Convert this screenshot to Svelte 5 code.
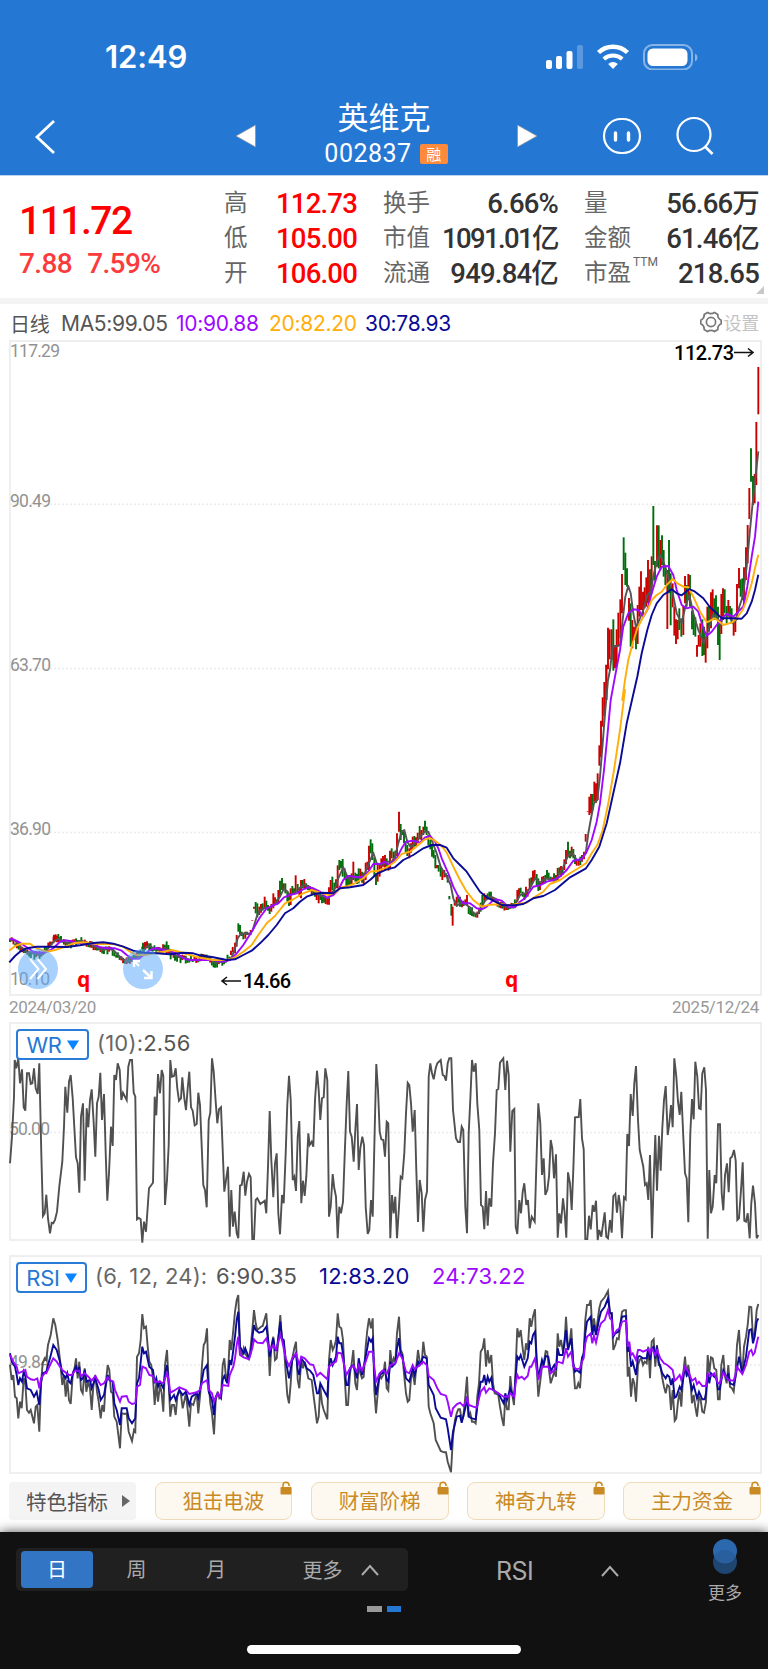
<script lang="ts">
  type Pt = [number, number]

  const quoteCols = [
    [
      { label: '高', value: '112.73', up: true },
      { label: '低', value: '105.00', up: true },
      { label: '开', value: '106.00', up: true }
    ],
    [
      { label: '换手', value: '6.66%' },
      { label: '市值', value: '1091.01亿', tight: true },
      { label: '流通', value: '949.84亿' }
    ],
    [
      { label: '量', value: '56.66万' },
      { label: '金额', value: '61.46亿' },
      { label: '市盈', value: '218.65', sup: 'TTM' }
    ]
  ]
  const indicators = ['狙击电波', '财富阶梯', '神奇九转', '主力资金']
  const periods = ['日', '周', '月']
  const gridLines = [504.3, 668.5, 832.5]
  const axisLabels = [
    { text: '117.29', y: 357, w: 50 },
    { text: '90.49', y: 507, w: 41 },
    { text: '63.70', y: 671, w: 41 },
    { text: '36.90', y: 835, w: 41 },
    { text: '10.10', y: 985, w: 40 }
  ]

  // series are stored in thirds of a pixel, relative to a block origin
  function block(ox: number, oy: number, s: string): Pt[] {
    return s.trim().split(/\s+/).map((p) => {
      const [x, y] = p.split(',').map(Number)
      return [ox + x / 3, oy + y / 3]
    })
  }
  const line = (pts: Pt[]) => pts.map(([x, y]) => `${x.toFixed(1)},${y.toFixed(1)}`).join(' ')

  const ma5 = [
    ...block(0, 900, '28,118 45,122 60,140 80,156 100,160 120,166 135,158 150,138 162,124 175,116 190,124 205,130 225,128 245,122 265,130 280,136 295,146 310,150 325,146 340,150 355,166 370,178 385,184 400,180 412,172 425,158 438,140 450,138 465,148 480,150 495,144 510,152 525,166 540,172 555,174 570,180 590,180'),
    ...block(200, 780, '0,538 15,532 30,536 45,548 60,546 80,543 95,532 105,505 113,475 122,462 135,460 150,462 158,450 170,410 180,390 195,384 210,382 225,372 240,350 252,325 262,335 270,345 285,338 297,325 312,315 325,318 340,330 355,345 370,350 385,355 395,340 405,325 415,295 430,262 440,285 450,300 465,292 480,295 495,280 505,255 520,218 530,250 545,255 560,245 575,245 585,230 595,190 605,155 613,150 622,185 632,202 645,190 660,170 675,155 685,155 697,185 710,220 722,260 740,290 752,315 760,355 770,378 780,370 795,372 810,382 820,400 832,402 843,385 855,362 870,350 885,355 900,372 920,382'),
    ...block(500, 660, '30,745 45,735 60,705 75,700 90,685 105,655 120,668 135,655 150,658 165,662 180,640 195,610 205,585 218,580 230,600 245,600 258,575 265,520 272,480 282,430 292,420 300,350 308,250 316,150 324,60'),
    ...block(560, 330, '150,1020 158,950 170,948 180,945 187,880 196,800 205,768 212,790 220,850 228,892 238,870 250,840 262,795 272,785 282,730 292,690 300,675 312,700 325,740 338,790 350,850 365,880 375,835 388,795 400,850 415,900 432,940 445,900 458,855 472,860 480,885 490,860 505,850 518,880 528,870 538,830 548,800 560,710 570,600 580,500 595,364')
  ]
  const ma10 = [
    ...block(0, 900, '28,118 40,118 60,128 80,142 100,155 120,158 140,156 160,145 180,125 195,121 215,124 235,130 260,130 280,132 300,142 325,145 345,145 365,152 380,165 400,178 415,178 430,165 450,150 470,144 490,150 510,153 530,160 550,175 570,180'),
    ...block(200, 780, '0,540 40,540 70,545 90,540 110,520 130,495 155,455 180,412 200,385 215,378 235,370 252,352 270,345 290,340 310,328 325,322 340,325 360,335 380,353 400,345 415,330 430,300 445,288 465,290 490,292 505,275 520,252 540,252 555,245 565,255 580,245 590,235 605,205 618,185 640,182 660,188 675,172 690,168 705,185 715,205 725,235 745,280 760,320 775,350 790,370 810,370 830,385 845,388 860,380 875,365 890,358 905,362 925,380 945,382'),
    ...block(500, 660, '60,725 75,715 100,680 120,676 140,665 160,660 180,650 200,630 220,602 245,597 258,580 275,540 290,485 300,430 312,330 322,230 332,120'),
    ...block(560, 330, '165,1040 180,960 190,890 205,850 220,838 235,840 250,860 262,840 275,790 290,740 305,710 325,708 340,735 350,780 365,825 380,835 400,830 415,845 430,895 440,917 455,905 470,885 485,865 500,852 520,860 535,845 550,830 562,770 575,680 585,620 595,515')
  ]
  const ma20 = [
    ...block(0, 900, '28,152 45,138 65,131 90,131 110,145 140,155 165,150 190,142 220,130 250,127 290,132 340,132 370,140 390,155 410,165 435,165 460,160 490,155 515,150 540,156 570,165'),
    ...block(200, 780, '0,533 40,540 80,540 105,532 130,515 155,495 175,465 200,430 225,408 255,370 280,358 310,340 335,330 360,338 385,345 405,338 425,322 445,318 465,310 490,295 510,275 535,272 560,262 585,245 605,222 630,215 655,195 675,178 690,174 705,182 725,198 740,218 760,260 780,300 800,335 820,360 845,380 870,374 900,373 930,376'),
    ...block(500, 660, '50,732 80,728 105,710 130,695 150,672 180,660 210,640 235,625 258,610 275,580 292,555 308,510 325,430 342,330 360,210 375,90'),
    ...block(560, 330, '187,1110 195,1050 205,990 218,940 232,895 250,860 265,835 275,810 290,795 305,785 320,765 338,747 352,760 370,770 385,772 400,800 420,845 440,877 465,865 490,885 515,878 530,865 548,840 560,810 575,760 585,715 595,674')
  ]
  const ma30 = [
    ...block(0, 900, '28,187 45,168 60,155 80,145 110,140 150,140 200,141 240,136 280,129 310,127 340,131 370,140 400,152 430,158 470,160 510,163 550,158 580,160'),
    ...block(200, 780, '0,526 40,532 80,540 105,538 130,525 155,512 180,490 205,465 230,435 255,400 280,385 300,365 320,350 340,343 365,338 400,340 420,325 450,322 490,315 510,300 530,282 560,268 585,262 610,240 640,225 670,205 695,195 720,195 740,203 760,235 780,255 800,275 820,305 840,335 860,352 880,362 905,375'),
    ...block(500, 660, '45,736 70,732 100,715 130,708 165,690 210,652 258,625 275,600 298,560 320,490 340,400 360,310 380,190 405,80'),
    ...block(560, 330, '232,1040 245,970 262,900 275,855 290,820 310,795 335,778 350,790 365,796 388,777 405,785 430,805 450,832 470,850 485,865 510,865 545,866 560,850 575,815 585,780 595,734')
  ]
  const maLines = [
    { color: '#555555', pts: line(ma5) },
    { color: '#9d0aff', pts: line(ma10) },
    { color: '#ffae0a', pts: line(ma20) },
    { color: '#0a0a96', pts: line(ma30) }
  ]

  // bars: x,high,low with r = rise, g = fall
  function bars(ox: number, oy: number, s: string) {
    return s.trim().split(/\s+/).map((b) => {
      const up = b.endsWith('r')
      const [x, hi, lo] = b.slice(0, -1).split(',').map(Number)
      return { x: ox + x / 3, y1: oy + hi / 3, y2: oy + lo / 3, up }
    })
  }
  function yAt(pts: Pt[], x: number) {
    const i = pts.findIndex((p) => p[0] >= x)
    if (i < 1) return pts[0][1]
    const [a, b] = [pts[i - 1], pts[i]]
    return a[1] + ((b[1] - a[1]) * (x - a[0])) / (b[0] - a[0] || 1)
  }
  // quiet stretches hug the 5-day average
  function quietBars(from: number, to: number) {
    const out = []
    let seed = 7
    for (let x = from; x < to; x += 1.74) {
      seed = (seed * 73 + 41) % 211
      const mid = yAt(ma5, x + 2) + ((seed % 7) - 3) * 0.5
      const half = 1.5 + (seed % 5) * 0.6
      out.push({ x, y1: mid - half, y2: mid + half, up: seed % 9 < 4 })
    }
    return out
  }
  const candles = [
    ...quietBars(10, 234),
    ...bars(0, 900, '162,104,122r 167,103,120r 175,102,118g 183,108,124g 429,128,152g 435,126,150r 441,124,145r 452,130,145g 500,124,150g 505,135,155g 512,155,178g 525,160,182g 645,185,203g'),
    ...bars(200, 780, '105,488,520r 110,465,500r 115,430,455g 120,435,462g 125,455,468g 130,460,478g 136,455,476r 141,455,465g 147,458,464r 152,450,465r 157,421,423r 162,380,386r 167,366,400g 172,370,412g 178,380,405r 183,372,398r 188,370,392g 194,350,385r 199,362,385g 204,375,392g 209,380,402g 214,372,395r 220,340,385r 225,352,375r 230,358,375g 235,330,370r 240,302,350g 246,294,330g 251,310,332r 256,310,340g 262,332,365g 267,340,378g 272,325,375r 277,318,345g 282,325,345g 287,286,335r 293,312,340g 298,325,350r 303,300,355r 308,300,325g 313,297,325r 318,310,328g 324,315,330g 330,318,332r 335,322,342r 340,330,345g 345,330,350g 350,335,360r 356,345,370r 361,340,360g 366,345,370g 372,348,368g 377,350,372r 382,355,374r 387,322,374r 392,300,345r 397,290,330g 403,308,335g 408,298,325r 413,256,325r 418,240,270g 423,243,265g 428,237,290g 434,265,300g 439,285,318g 444,292,325g 450,285,318g 455,280,315r 460,245,300r 466,278,305g 471,282,312g 476,265,310g 481,266,290r 486,275,308g 491,278,312r 497,248,300r 502,245,270r 507,197,270r 512,178,220g 517,190,240g 523,232,290g 528,280,315g 533,255,305r 539,250,290r 544,235,275r 549,228,260r 555,225,270r 560,235,260g 565,250,272r 570,212,268r 575,205,235g 581,215,240r 586,212,235g 591,160,228r 597,95,155r 602,132,180g 607,150,165g 612,155,190g 617,185,220g 622,195,228g 628,205,235r 633,190,218r 638,170,208r 643,168,200g 648,172,198r 653,158,190r 659,138,178g 664,150,180r 670,140,165r 675,122,152g 680,140,165g 685,165,195g 691,180,208g 696,198,230g 701,210,235g 706,225,265g 711,255,265r 716,255,275g 722,262,290g 727,270,300r 733,270,292r 738,280,290g 743,285,308g 748,348,358g 754,372,407g 758,380,437r 764,360,377r 770,350,375r 775,345,368g 780,350,380g 786,365,382r 791,362,378g 796,358,374r 801,345,375r 806,378,402g 811,385,405g 816,382,408g 821,395,410g 827,400,412g 832,395,413r 837,388,402r 842,368,395g 847,345,372g 853,340,365r 858,345,358r 863,340,358g 868,335,355g 873,335,360g 878,350,362r'),
    ...quietBars(494, 516),
    ...bars(500, 660, '52,690,725r 57,685,710r 62,683,700g 68,695,710g 73,700,720g 78,680,712r 83,688,710r 89,655,690r 94,652,675g 99,632,665r 104,630,660r 110,642,675g 115,655,693g 120,665,690r 126,650,672r 131,648,670r 136,645,670g 141,630,655g 146,638,660g 152,650,662g 157,652,664r 162,640,665g 168,645,665r 173,624,660r 178,622,645g 183,618,650r 188,625,645g 193,598,630r 198,570,612r 204,545,592g 210,572,595g 215,560,590r 220,567,595g 225,585,612g 230,600,617r 236,600,617r 241,590,615g 246,585,605r 252,575,598r 257,522,545r 263,454,456r 268,410,465r 273,402,460r 278,402,450g 283,365,425r 288,370,428r 293,340,420r 298,256,317r 303,182,292r 308,112,200r 313,66,168r 319,14,120r'),
    ...bars(560, 330, '144,893,1018r 139,1005,1110r 149,898,988r 155,898,990r 160,868,1022g 165,945,1015r 170,898,1010r 175,848,950r 181,808,925r 186,732,850r 191,622,720g 196,668,765g 201,715,770g 207,804,872r 212,820,950g 217,870,955r 222,890,930r 228,890,958g 233,825,942r 238,770,860r 243,724,840r 249,785,855r 254,772,835r 259,742,830r 264,690,820r 270,718,820g 275,679,790r 280,528,705g 285,693,752g 291,586,710r 296,586,715g 301,630,720r 306,616,705g 311,660,740g 316,705,765g 322,720,897r 327,630,790g 332,730,886g 338,760,832r 343,830,917r 348,868,942r 353,870,928r 358,835,900g 364,865,920g 370,828,915r 375,738,820r 380,765,830g 385,732,810r 390,735,830g 396,842,898g 401,855,915g 406,862,920g 411,945,980r 416,915,950r 421,880,950r 427,868,978g 432,890,975g 437,920,998r 442,830,955r 447,828,905g 453,787,895r 458,778,860r 463,805,870g 468,796,870g 474,830,945g 479,880,990g 484,792,912r 489,775,870r 494,778,850g 500,828,880g 505,810,860r 510,828,865g 515,835,880g 521,870,917r 526,860,906r 531,762,870r 537,714,775r 542,748,800g 547,745,810g 552,712,830r 558,652,750r 563,585,700r 568,474,567r 573,355,455g 579,438,525g 584,432,520r 589,276,465r 595,111,253r')
  ]

  const wr = line([
    ...block(0, 1020, '30,430 36,350 42,230 44,120 49,145 55,115 60,190 66,148 71,262 76,272 81,160 87,160 92,192 97,190 102,145 107,205 113,222 118,130 124,400 129,588 134,580 139,524 144,595 150,640 155,608 160,610 165,600 171,575 178,500 187,425 192,320 196,200 202,278 207,185 212,165 218,235 228,412 233,430 238,518 243,290 249,250 254,482 260,265 265,322 270,240 275,208 281,310 286,410 291,250 296,230 301,158 306,300 312,222 317,400 322,542 327,460 333,320 338,378 343,165 348,180 353,130 359,150 364,240 369,218 380,240 385,140 390,120 396,120 401,218 406,230 411,598 416,594 422,598 427,668 432,605 438,635 447,505 459,488 464,230 469,286 474,162 480,220 485,150 490,168 495,555 501,480 506,375 511,120 516,170 522,168 527,145 532,205 537,242 543,235 547,172 553,235 558,270 563,205 568,155 573,262 578,272 584,316 590,312 595,218 600,255 610,495 615,510 620,562 626,300 631,278 636,115 641,155 647,245 652,310 657,268 663,262 668,390 673,515 678,480 684,440 689,650 694,510 699,620 704,575 710,640 715,655 720,497 725,495 731,455 736,527 741,485 747,462 752,472 757,657 762,657 767,540 772,535 781,552 794,542 799,580 804,440 809,273 814,420 820,532 825,430 830,400 835,580 840,643 846,525 851,550 857,400 862,255 867,167 872,240 878,480 883,470 888,513 893,350 898,303 904,550 909,482 914,528 919,470 925,340 929,375 935,365 940,380 945,240 951,152 956,210 961,300 966,235 971,232 976,145 982,180 987,590 992,560 998,462 1003,505 1008,530 1013,655 1018,560 1023,580 1029,545 1035,380 1040,250 1045,153 1050,335 1055,350 1061,425 1066,330 1071,252 1076,450 1081,385 1087,350 1092,375 1097,560 1103,642 1108,630 1113,540 1118,590 1124,330 1129,132 1134,210 1139,335 1144,358 1150,360 1155,410 1160,305'),
    ...block(380, 1020, '25,310 31,655 36,525 41,580 46,530 51,655 57,560 62,470 67,475 73,400 78,280 83,188 88,195 93,250 98,335 104,270 109,450 114,606 119,480 125,520 130,635 135,540 141,515 146,170 151,130 156,160 161,178 167,145 172,130 182,120 188,165 193,168 198,182 203,130 208,115 214,115 219,270 228,355 234,366 240,366 245,320 250,330 256,560 261,640 266,340 271,240 276,120 281,155 287,130 292,250 298,330 303,555 308,560 313,628 318,513 323,617 328,535 334,560 339,430 345,340 350,210 355,207 360,128 370,115 376,210 381,122 386,165 391,395 397,273 403,267 407,620 412,642 418,540 423,580 428,515 433,490 439,555 444,540 449,625 455,590 464,605 470,400 475,250 481,310 486,465 491,415 496,525 502,510 507,470 512,360 517,385 522,475 528,403 533,653 538,580 543,610 549,535 554,580 559,653 564,457 570,490 575,570 580,450 585,292 596,291 601,237 606,355 611,388 616,657 622,657 627,587 632,628 638,555 643,575 648,542 653,660 658,630 664,650 674,577 679,650 684,655 690,600 695,638 700,528 706,521 711,578 716,525 721,560 726,655 732,532 737,538 742,342 747,378 752,222 758,288 763,190 768,138 774,300 779,390 790,440 795,495 800,490 805,540 810,405 816,655 821,480 826,345 831,512 837,347 842,452 847,325 852,240 857,198 863,345 868,310 873,255 878,322 883,115 889,170 894,245 899,285 904,215 910,350 915,460 920,475 925,607 931,340 936,237 941,298 946,125 952,170 957,265 962,267 967,160 973,142 978,210 983,656 988,450 993,580 998,560 1004,465 1009,490 1014,313 1020,313 1025,520 1030,571 1035,465 1041,430 1046,517 1051,415 1056,410 1062,390 1067,422 1072,600 1077,595 1083,510 1088,427 1093,602 1098,605 1103,580 1109,655 1114,550 1119,497 1125,550 1130,655 1135,645')
  ])

  const rsi6 = line([
    ...block(0, 1250, '30,345 35,390 40,375 45,440 50,445 55,505 60,455 65,475 71,385 76,400 81,480 87,488 92,480 102,520 107,470 112,465 118,545 123,400 128,340 134,325 139,330 144,285 152,255 160,205 166,225 173,270 180,330 187,405 192,375 197,440 202,390 207,450 212,462 218,375 223,360 228,325 233,385 238,335 243,420 248,430 254,355 259,425 265,395 270,415 275,480 280,410 286,375 291,425 296,455 302,505 307,465 312,485 317,400 323,345 328,360 333,425 338,430 343,500 350,515 360,595 365,490 375,492 380,490 386,545 396,573 402,540 406,545 411,320 417,310 422,270 427,192 432,235 438,230 443,290 448,335 454,345 459,385 464,465 469,400 474,455 480,405 485,430 490,485 495,345 501,300 506,400 511,500 516,465 522,465 527,495 532,440 538,420 543,435 548,475 558,430 563,480 568,530 573,460 580,465 590,430 595,490 601,430 606,345 611,285 616,275 621,235 626,400 631,460 636,490 642,553 647,450 653,425 658,445 663,440 668,345 673,325 679,395 684,370 689,270 694,300 700,240 705,185 710,150 715,135 720,290 726,320 731,295 736,310 741,320 747,325 752,290 757,240 762,180 767,220 772,240 783,230 788,228 799,190 804,260 809,378 814,290 820,260 825,330 830,325 836,260 841,195 846,270 851,275 857,370 862,435 867,460 872,400 877,325 883,295 888,275 893,390 898,415 904,330 909,355 914,335 920,360 925,385 935,390 940,430 945,470 951,520 956,500 961,410 966,460 971,480 982,508 987,330 992,270 998,300 1003,290 1008,270 1013,190 1018,230 1024,235 1029,270 1034,380 1039,465 1044,465 1050,370 1055,340 1060,300 1066,400 1071,420 1076,340 1081,370 1086,385 1091,380 1097,290 1102,240 1107,205 1113,235 1118,205 1123,420 1128,490 1133,430 1139,370'),
    ...block(380, 1250, '4,385 10,375 15,335 20,415 25,422 31,300 36,345 41,325 46,335 51,250 57,200 62,300 67,310 72,370 78,430 83,455 88,450 93,385 98,365 104,405 109,350 114,300 119,335 125,340 130,275 135,315 140,320 146,470 151,490 156,505 161,520 167,570 172,580 182,603 192,607 198,607 203,635 213,667 219,560 225,510 230,490 235,478 240,478 245,510 250,500 256,440 261,380 266,500 271,490 276,515 282,515 287,520 292,440 297,400 302,305 308,295 313,265 318,350 323,300 328,340 334,315 339,400 344,430 350,432 355,435 360,470 365,500 371,528 376,440 381,478 386,478 391,378 396,430 402,465 407,350 412,235 417,262 422,240 428,295 433,330 438,280 443,300 449,205 454,230 459,200 465,178 470,350 475,440 480,400 486,350 491,340 497,303 502,305 507,360 512,400 517,385 523,365 528,380 533,250 538,290 543,270 548,300 553,290 558,200 564,295 569,280 574,235 580,345 585,415 590,415 595,400 600,415 606,325 611,310 616,210 621,165 627,165 632,150 637,240 642,205 648,250 653,210 658,175 663,155 674,142 684,123 690,190 695,190 700,300 706,285 711,265 716,268 721,225 726,185 732,181 738,181 743,380 748,350 753,440 758,385 763,400 768,455 774,345 779,330 784,325 789,345 794,335 800,340 805,290 810,385 815,275 821,268 826,350 831,285 836,345 841,345 847,385 852,410 857,430 862,405 868,410 873,480 878,420 884,512 889,505 894,455 899,425 904,470 910,370 915,320 920,380 925,345 931,390 936,460 941,435 946,470 951,500 957,440 962,450 967,485 972,488 978,455 983,315 988,370 993,322 998,325 1003,355 1009,360 1014,448 1019,448 1024,345 1030,315 1035,380 1040,400 1045,345 1050,410 1056,415 1061,425 1066,380 1071,285 1077,240 1082,330 1087,370 1092,290 1098,260 1103,225 1108,170 1114,172 1119,265 1124,250 1130,180 1135,162')
  ])
  const rsi12 = line([
    ...block(0, 1250, '30,310 35,335 45,350 50,375 55,405 60,385 66,395 71,365 76,378 81,415 92,420 102,440 110,425 118,465 123,400 128,370 139,365 144,345 150,325 160,285 170,300 180,335 187,370 197,385 202,370 207,395 212,400 220,365 228,350 233,370 238,350 243,390 249,385 254,360 260,395 270,390 275,415 286,385 296,420 302,450 312,435 323,375 328,390 338,395 343,460 350,480 360,525 365,475 380,475 386,505 396,520 406,505 411,400 417,385 427,290 432,310 438,305 448,350 459,360 464,400 469,385 474,410 480,395 490,415 495,370 501,345 506,400 511,450 522,435 527,450 538,420 548,435 558,425 568,465 575,440 590,430 595,445 606,390 611,360 621,345 626,425 636,450 642,495 647,440 653,430 663,445 668,390 673,378 682,400 689,330 694,345 700,300 705,260 710,210 715,185 720,290 731,310 736,295 747,325 752,310 757,265 762,225 767,240 777,248 788,245 799,230 804,265 809,320 820,265 825,300 830,300 841,215 846,265 851,270 857,330 867,385 877,330 888,310 893,360 898,375 904,325 914,340 920,355 930,362 940,375 951,430 956,430 961,400 971,420 982,440 987,350 992,325 998,345 1008,320 1013,260 1018,280 1024,280 1029,310 1039,405 1044,405 1050,355 1060,345 1071,385 1076,325 1086,375 1097,320 1107,265 1113,275 1118,265 1123,370 1128,435 1139,375'),
    ...block(380, 1250, '8,368 15,360 20,390 25,395 31,335 36,350 46,340 51,295 57,265 62,315 67,315 78,385 88,395 98,355 104,375 114,335 119,345 130,320 140,325 146,405 161,435 167,475 182,503 198,508 203,535 213,600 219,545 230,500 240,497 245,518 256,475 261,440 266,500 276,505 287,508 297,430 302,395 308,395 313,375 318,405 323,380 328,395 334,383 339,420 355,430 371,460 376,430 381,450 391,415 402,445 407,380 412,320 417,328 422,315 433,350 443,325 449,275 454,280 459,255 465,245 470,330 475,385 486,330 491,345 497,318 505,320 512,365 517,355 523,345 528,360 533,295 538,315 548,315 558,240 564,300 574,265 580,340 585,365 590,360 600,368 606,325 611,310 616,250 621,215 632,200 637,255 642,225 648,255 658,205 663,185 674,170 684,145 690,190 695,190 700,260 706,250 716,245 726,200 738,198 743,305 748,290 753,350 758,335 768,375 774,320 779,318 789,325 800,325 805,295 810,330 815,295 821,290 826,325 831,290 836,335 847,370 857,385 862,375 868,380 873,405 878,385 884,443 889,440 899,410 904,420 910,385 915,350 920,375 925,365 936,420 941,405 951,445 957,425 967,448 974,448 978,430 983,370 988,400 993,370 1003,380 1009,385 1014,418 1019,418 1030,360 1040,385 1045,370 1050,400 1061,405 1066,385 1077,320 1087,370 1098,320 1108,240 1114,238 1119,280 1124,260 1130,215 1135,205')
  ])
  const rsi24 = line([
    ...block(0, 1250, '30,315 40,335 50,350 55,370 66,365 76,360 81,380 92,388 102,390 112,385 118,415 123,385 134,370 139,370 150,345 160,325 170,335 180,350 187,360 207,375 215,375 225,362 238,362 243,378 254,370 265,380 275,392 286,378 296,395 302,405 312,400 323,382 333,392 340,395 345,420 360,455 365,440 380,438 386,455 396,462 406,460 411,410 420,405 427,350 438,355 448,375 459,378 464,395 480,395 490,400 501,370 506,390 511,428 522,422 538,412 558,420 568,432 590,427 600,420 606,400 621,390 626,420 636,430 642,455 653,430 660,440 668,405 685,408 689,375 700,350 705,325 710,285 715,260 720,315 731,322 747,328 757,295 762,268 772,278 788,280 799,265 809,300 820,285 828,300 841,255 846,270 857,325 867,348 877,325 888,310 898,345 904,320 914,325 930,343 940,345 951,378 961,368 982,388 987,350 1000,340 1008,335 1013,308 1024,310 1029,330 1039,375 1050,355 1060,347 1071,365 1076,345 1086,362 1097,335 1107,305 1118,305 1123,350 1128,395 1139,370'),
    ...block(380, 1250, '4,365 10,360 20,372 31,345 46,340 57,310 67,325 78,365 88,370 98,345 104,358 119,345 130,335 140,345 146,378 161,390 172,415 182,432 198,437 203,455 213,500 219,475 230,463 240,458 250,468 256,460 261,440 266,465 280,470 290,473 302,425 313,412 318,428 328,415 340,420 355,430 371,440 385,440 391,430 402,440 407,400 412,375 417,385 425,380 433,388 443,378 449,350 454,350 465,325 475,390 486,350 497,350 505,350 512,370 523,360 533,335 548,340 558,295 564,320 574,305 580,350 590,358 600,355 606,335 611,325 616,280 621,260 632,250 637,280 642,258 648,278 658,235 663,220 674,210 684,180 690,205 695,210 700,255 711,240 720,235 726,215 738,212 743,290 748,275 753,315 758,310 768,330 774,300 780,300 789,305 805,298 810,310 815,295 826,315 831,300 841,325 852,340 862,345 868,350 878,360 884,392 889,388 899,375 904,390 915,350 925,365 936,392 946,385 951,402 957,395 967,408 978,408 983,370 993,378 1003,370 1014,400 1019,400 1030,368 1045,390 1061,392 1066,375 1071,350 1087,372 1098,345 1108,305 1114,300 1119,315 1124,308 1130,280 1135,260')
  ])
</script>

<div class="app">
  <header>
    <div class="status">
      <span class="time">12:49</span>
      <svg class="status-icons" viewBox="0 0 156 26" width="156" height="26">
        <g fill="#fff">
          <rect x="1" y="16" width="6" height="9" rx="2" />
          <rect x="11" y="12" width="6" height="13" rx="2" />
          <rect x="21.500" y="7" width="6" height="18" rx="2" />
          <rect x="32" y="1" width="6" height="24" rx="2" opacity=".25" />
          <path d="M68 25 l-4.800 -5 a7 7 0 0 1 9.600 0 z" />
          <rect x="102.500" y="4.500" width="40" height="17.500" rx="5.500" />
          <path d="M150 9.500 q2.500 1 2.500 4 t-2.500 4 z" opacity=".45" />
        </g>
        <g fill="none" stroke="#fff">
          <path d="M53.500 8.500 a21 21 0 0 1 29 0" stroke-width="4.400" />
          <path d="M58.800 15 a13.500 13.500 0 0 1 18.400 0" stroke-width="4" />
          <rect x="99" y="1" width="48" height="24.500" rx="8.500" stroke-width="2" opacity=".45" />
        </g>
      </svg>
    </div>
    <nav>
      <svg class="back" viewBox="0 0 22 36" width="22" height="36"><path d="M20 2 L3 18 L20 34" fill="none" stroke="#fff" stroke-width="2.800" /></svg>
      <svg class="prev" viewBox="0 0 20 24" width="20" height="24"><path d="M19.500 1 V23 L0 12 z" fill="#fff" stroke="#8a8f96" stroke-width=".7" /></svg>
      <div class="title">
        <h1>英维克</h1>
        <div class="code">002837 <i>融</i></div>
      </div>
      <svg class="next" viewBox="0 0 20 24" width="20" height="24"><path d="M.5 1 V23 L20 12 z" fill="#fff" stroke="#8a8f96" stroke-width=".7" /></svg>
      <svg class="bot" viewBox="0 0 40 40" width="40" height="40" fill="none" stroke="#fff" stroke-width="2.200">
        <rect x="2" y="3" width="36" height="34" rx="17" />
        <path d="M13.500 17 v7 M26.500 17 v7" stroke-width="3.400" stroke-linecap="round" />
      </svg>
      <svg class="search" viewBox="0 0 40 40" width="40" height="40" fill="none" stroke="#fff" stroke-width="2.200">
        <circle cx="19" cy="18.500" r="16.500" />
        <path d="M30 30.500 L37.500 38" stroke-width="2.600" />
      </svg>
    </nav>
  </header>

  <section class="quote">
    <div class="price">
      <div class="last">111.72</div>
      <div class="change"><span>7.88</span><span>7.59%</span></div>
    </div>
    {#each quoteCols as col}
      <dl>
        {#each col as item}
          <div class="row">
            <dt>{item.label}{#if item.sup}<sup>{item.sup}</sup>{/if}</dt>
            <dd class:up={item.up} class:tight={item.tight}>{item.value}</dd>
          </div>
        {/each}
      </dl>
    {/each}
    <span class="corner"></span>
  </section>

  <div class="legend">
    <span class="cn">日线</span>
    <span class="m5">MA5:99.05</span>
    <span class="m10">10:90.88</span>
    <span class="m20">20:82.20</span>
    <span class="m30">30:78.93</span>
    <span class="settings">
      <svg viewBox="0 0 22 22" width="22" height="22" fill="none" stroke="#777" stroke-width="1.700">
        <path d="M7.500 1.500 q3.500 2.200 7 0 l3.300 2 q-.3 4 3.400 5.800 v3.400 q-3.700 1.800 -3.400 5.800 l-3.300 2 q-3.500 -2.200 -7 0 l-3.300 -2 q.3 -4 -3.400 -5.800 v-3.400 q3.700 -1.800 3.400 -5.800 z" />
        <circle cx="11" cy="11" r="4.600" />
      </svg>设置
    </span>
  </div>

  <div class="panel kline">
    <svg class="plot" viewBox="9 340 753 656">
      {#each gridLines as y}
        <line x1="10" x2="761" y1={y} y2={y} class="grid" />
      {/each}
      {#each axisLabels as l}
        <text x="10" y={l.y} class="axis" textLength={l.w}>{l.text}</text>
      {/each}
      {#each candles as c}
        <line x1={c.x} x2={c.x} y1={c.y1} y2={c.y2} stroke={c.up ? '#c80000' : '#006e0a'} stroke-width="1.900" />
      {/each}
      {#each maLines as m}
        <polyline points={m.pts} stroke={m.color} class="ma" />
      {/each}
      <text x="674" y="360" class="mark" textLength="60">112.73</text>
      <path d="M734 352.500 H753 M748 348.500 L753 352.500 L748 356.500" class="arrow" />
      <text x="243" y="988" class="mark" textLength="48">14.66</text>
      <path d="M241 981 H222 M227 977 L222 981 L227 985" class="arrow" />
      <text x="77" y="987" class="q">q</text>
      <text x="505" y="987" class="q">q</text>
      <g stroke="#fff" stroke-width="2.400" fill="none">
        <circle cx="38" cy="969" r="20" fill="#58a9fb" fill-opacity=".52" stroke="none" />
        <path d="M30 959 L38.500 969 L30 979 M37.500 959 L46 969 L37.500 979" stroke-width="2" />
        <circle cx="143" cy="969" r="20" fill="#58a9fb" fill-opacity=".52" stroke="none" />
        <path d="M134 967 V961 H140 M134.500 961.500 L139 966 M143 970 L151 977.500 M151.500 971 V978 H144" />
      </g>
    </svg>
  </div>
  <div class="dates"><span>2024/03/20</span><span>2025/12/24</span></div>

  <div class="panel">
    <svg class="plot" viewBox="9 1022 753 219">
      <line x1="10" x2="761" y1="1132.500" y2="1132.500" class="grid" />
      <text x="9" y="1135" class="axis" textLength="41">50.00</text>
      <polyline points={wr} class="osc" stroke="#505050" />
    </svg>
    <div class="panel-head">
      <button type="button">WR<svg viewBox="0 0 12 10" width="12" height="10"><path d="M0 .5 H12 L6 10 z" fill="#0a84ff" /></svg></button>
      <span class="params">(10):</span><span>2.56</span>
    </div>
  </div>

  <div class="panel second">
    <svg class="plot" viewBox="9 1255 753 219">
      <line x1="10" x2="761" y1="1365" y2="1365" class="grid" />
      <text x="9" y="1368" class="axis" textLength="41">49.84</text>
      <polyline points={rsi6} class="osc" stroke="#505050" />
      <polyline points={rsi12} class="osc" stroke="#0a0a96" />
      <polyline points={rsi24} class="osc" stroke="#9d0aff" />
    </svg>
    <div class="panel-head">
      <button type="button">RSI<svg viewBox="0 0 12 10" width="12" height="10"><path d="M0 .5 H12 L6 10 z" fill="#0a84ff" /></svg></button>
      <span class="params wide">(6, 12, 24):</span>
      <span class="v6">6:90.35</span>
      <span class="v12">12:83.20</span>
      <span class="v24">24:73.22</span>
    </div>
  </div>

  <div class="tags">
    <div class="tag-main">特色指标<svg viewBox="0 0 8 12" width="8" height="12"><path d="M0 0 L8 6 L0 12 z" fill="#666" /></svg></div>
    {#each indicators as name}
      <div class="tag">
        {name}
        <svg class="lock" viewBox="0 0 12 14" width="12" height="14">
          <path d="M3 7 V4.200 a3 3 0 0 1 6 0 V5" fill="none" stroke="#c98a24" stroke-width="1.500" />
          <rect x=".5" y="6" width="11" height="7.500" rx="1" fill="#c98a24" />
        </svg>
      </div>
    {/each}
  </div>

  <footer>
    <div class="bar">
      <div class="periods">
        {#each periods as p, i}
          <span class:active={i === 0}>{p}</span>
        {/each}
        <span class="more">更多<svg viewBox="0 0 18 12" width="18" height="12"><path d="M1 11 L9 2 L17 11" /></svg></span>
      </div>
      <div class="indicator">RSI<svg viewBox="0 0 18 12" width="18" height="12"><path d="M1 11 L9 2 L17 11" /></svg></div>
      <div class="menu">
        <svg viewBox="0 0 26 38" width="26" height="38">
          <circle cx="13" cy="24" r="12" fill="#1f4571" />
          <circle cx="13" cy="13" r="12" fill="#2b68ae" />
          <path d="M2.200 18.800 a12 12 0 0 1 21.600 0 a12 12 0 0 1 -21.600 0" />
        </svg>
        更多
      </div>
    </div>
    <div class="dots"><i></i><i class="on"></i></div>
    <div class="home"></div>
  </footer>
</div>

<style>
  :global(body) { margin: 0; background: #fff; }
  .app { width: 768px; height: 1669px; overflow: hidden; display: flex; flex-direction: column; background: #fff; font-family: Inter, "Noto Sans CJK SC", sans-serif; color: #555; }
  svg { display: block; flex: none; }

  header { height: 175px; flex: none; background: #2577d4; color: #fff; border-bottom: 1px solid #b9d3f2; }
  .status { display: flex; justify-content: space-between; align-items: center; height: 26px; padding: 44px 68px 0 105px; }
  .time { font-size: 31px; font-weight: 600; letter-spacing: -0.1px; line-height: 26px; }
  .status-icons { margin-right: -1px; }
  nav { display: flex; align-items: center; padding-left: 34px; height: 74px; margin-top: 28px; }
  .back { margin-top: 4px; }
  .prev { margin: 2px 0 0 180px; }
  .title { width: 261px; margin-top: -1px; text-align: center; }
  h1 { margin: 0 5px 0 0; font: 400 31px/36px "Noto Sans CJK SC", sans-serif; }
  .code { display: flex; justify-content: center; align-items: center; gap: 8px; height: 38px; padding: 2px 1px 0 0; box-sizing: border-box; font: 25px/36px Roboto, sans-serif; letter-spacing: 0.5px; }
  .code i { width: 28px; height: 20px; background: #ff8a3c; border-radius: 2px; font: 15px/19px "Noto Sans CJK SC", sans-serif; letter-spacing: 0; text-align: center; }
  .next { margin-top: 2px; }
  .bot { margin: 2px 0 0 65px; }
  .search { margin: 2px 0 0 33px; }

  .quote { position: relative; display: flex; height: 122px; flex: none; box-sizing: border-box; padding: 10px 9px 0 19px; font-family: Roboto, "Noto Sans CJK SC", sans-serif; }
  .price { width: 205px; color: #f00; font-weight: 500; }
  .last { font-size: 39px; line-height: 40px; margin-top: 15px; letter-spacing: -1.500px; }
  .change { display: flex; gap: 15px; font-size: 28px; font-weight: 500; line-height: 34px; margin-top: 6px; color: #fb3b3b; letter-spacing: -0.6px; }
  dl { margin: 0; width: 133px; }
  dl:nth-of-type(2) { width: 175px; margin-left: 26px; }
  dl:nth-of-type(3) { width: 175px; margin-left: 26px; }
  .row { display: flex; justify-content: space-between; align-items: center; height: 35px; white-space: nowrap; }
  dt { font-size: 23.500px; color: #666; position: relative; line-height: 35px; }
  sup { position: absolute; left: 49px; top: 0; font-size: 12px; line-height: 12px; letter-spacing: 0; }
  dd { margin: 0; font-size: 27.500px; font-weight: 500; color: #333; line-height: 36px; letter-spacing: -0.8px; }
  dd.up { color: #f00; }
  dd.tight { letter-spacing: -1.600px; }
  .corner { position: absolute; right: 4px; bottom: 4px; border: 4.500px solid transparent; border-right-color: #c8c8c8; border-bottom-color: #c8c8c8; }

  .legend { display: flex; align-items: center; height: 42px; box-sizing: border-box; flex: none; padding: 3px 9px 0 10px; border-top: 6px solid #f4f4f4; font-size: 21px; letter-spacing: -0.3px; white-space: nowrap; }
  .cn { width: 51px; font: 20px/28px "Noto Sans CJK SC", sans-serif; }
  .m5 { width: 115px; }
  .m10 { width: 93px; color: #9d0aff; }
  .m20 { width: 96px; color: #ffae0a; }
  .m30 { color: #0a0a96; }
  .settings { display: flex; align-items: center; gap: 2px; margin: -4px 0 0 auto; font: 18px/24px "Noto Sans CJK SC", sans-serif; color: #c4c4c4; }

  .panel { position: relative; flex: none; height: 219px; margin: 0 6px 0 9px; box-sizing: border-box; border: 2px solid #efefef; }
  .kline { height: 656px; }
  .second { margin-top: 14px; }
  .plot { position: absolute; left: -2px; top: -2px; width: 753px; height: calc(100% + 4px); overflow: visible; }
  .grid { stroke: #ebebeb; stroke-width: 1.500; stroke-dasharray: 2 2; }
  .axis { font: 17.500px Roboto, sans-serif; fill: #929292; }
  .mark { font: 500 20px Roboto, sans-serif; fill: #000; }
  .q { font: 700 21px "Noto Sans", sans-serif; fill: #f00; }
  .arrow { stroke: #111; stroke-width: 1.600; fill: none; }
  .ma { fill: none; stroke-width: 1.900; stroke-linejoin: round; }
  .osc { fill: none; stroke-width: 1.900; }
  .dates { display: flex; justify-content: space-between; flex: none; height: 26px; padding: 0 9px; font: 17px/22px Roboto, sans-serif; color: #999; letter-spacing: -0.35px; }
  .panel-head { position: relative; display: flex; align-items: center; padding: 5px 0 0 5px; font-size: 22px; line-height: 26px; white-space: nowrap; }
  .panel-head span { margin-top: -4px; letter-spacing: 0.2px; }
  button { display: flex; align-items: center; justify-content: center; gap: 5px; width: 73px; height: 31px; box-sizing: border-box; padding: 0; margin-right: 8px; background: #fff; border: 2px solid #2b7cd8; border-radius: 4px; color: #2577d4; font: 22px Inter, sans-serif; letter-spacing: -0.3px; }
  .second button { width: 71px; }
  .params { color: #666; }
  .wide { width: 121px; }
  .v6 { width: 103px; }
  .v12 { width: 113px; color: #0a0a96; }
  .v24 { color: #9d0aff; }

  .tags { display: flex; gap: 18.500px; flex: none; height: 38px; margin: 8px 7px 0 9px; font: 20.500px/36px "Noto Sans CJK SC", sans-serif; }
  .tag-main { display: flex; align-items: center; gap: 14px; width: 127px; box-sizing: border-box; padding-left: 17px; background: #f4f4f4; border-radius: 4px; white-space: nowrap; }
  .tag { position: relative; flex: 1; box-sizing: border-box; border: 1.500px solid #efdcbb; border-radius: 8px; background: #fdf8f0; color: #c98a24; text-align: center; line-height: 35px; }
  .lock { position: absolute; right: -1px; top: -2px; }

  footer { position: relative; flex: 1; margin-top: 12px; background: #111; box-shadow: 0 0 11px rgba(0, 0, 0, 0.7); color: #aaa; font: 20px "Noto Sans CJK SC", sans-serif; }
  .bar { display: flex; height: 74px; }
  .periods { display: flex; align-items: center; width: 392px; height: 43px; box-sizing: border-box; margin: 16px 0 0 16px; padding-left: 5px; background: #202020; border-radius: 5px; }
  .periods span { width: 72px; height: 37px; line-height: 36px; margin-right: 7.500px; border-radius: 4px; text-align: center; }
  .periods .active { background: #3175c4; color: #fff; }
  .periods .more { display: flex; align-items: center; gap: 18px; width: auto; margin-left: 43px; }
  .bar path { fill: none; stroke: #aaa; stroke-width: 2; }
  .indicator { display: flex; align-items: center; gap: 68px; height: 43px; margin: 17px 0 0 88px; font: 25px Inter, sans-serif; letter-spacing: -0.6px; }
  .menu { display: flex; flex-direction: column; align-items: center; margin: 6px 0 0 auto; padding-right: 26px; font-size: 17px; line-height: 24px; gap: 4px; }
  .menu path { fill: #2a5f9e; stroke: none; }
  .dots { display: flex; justify-content: center; gap: 5px; }
  .dots i { width: 14.500px; height: 6px; background: #999; }
  .dots .on { background: #2577d4; }
  .home { width: 274px; height: 9px; margin: 33px auto 0; background: #fff; border-radius: 5px; }
</style>
